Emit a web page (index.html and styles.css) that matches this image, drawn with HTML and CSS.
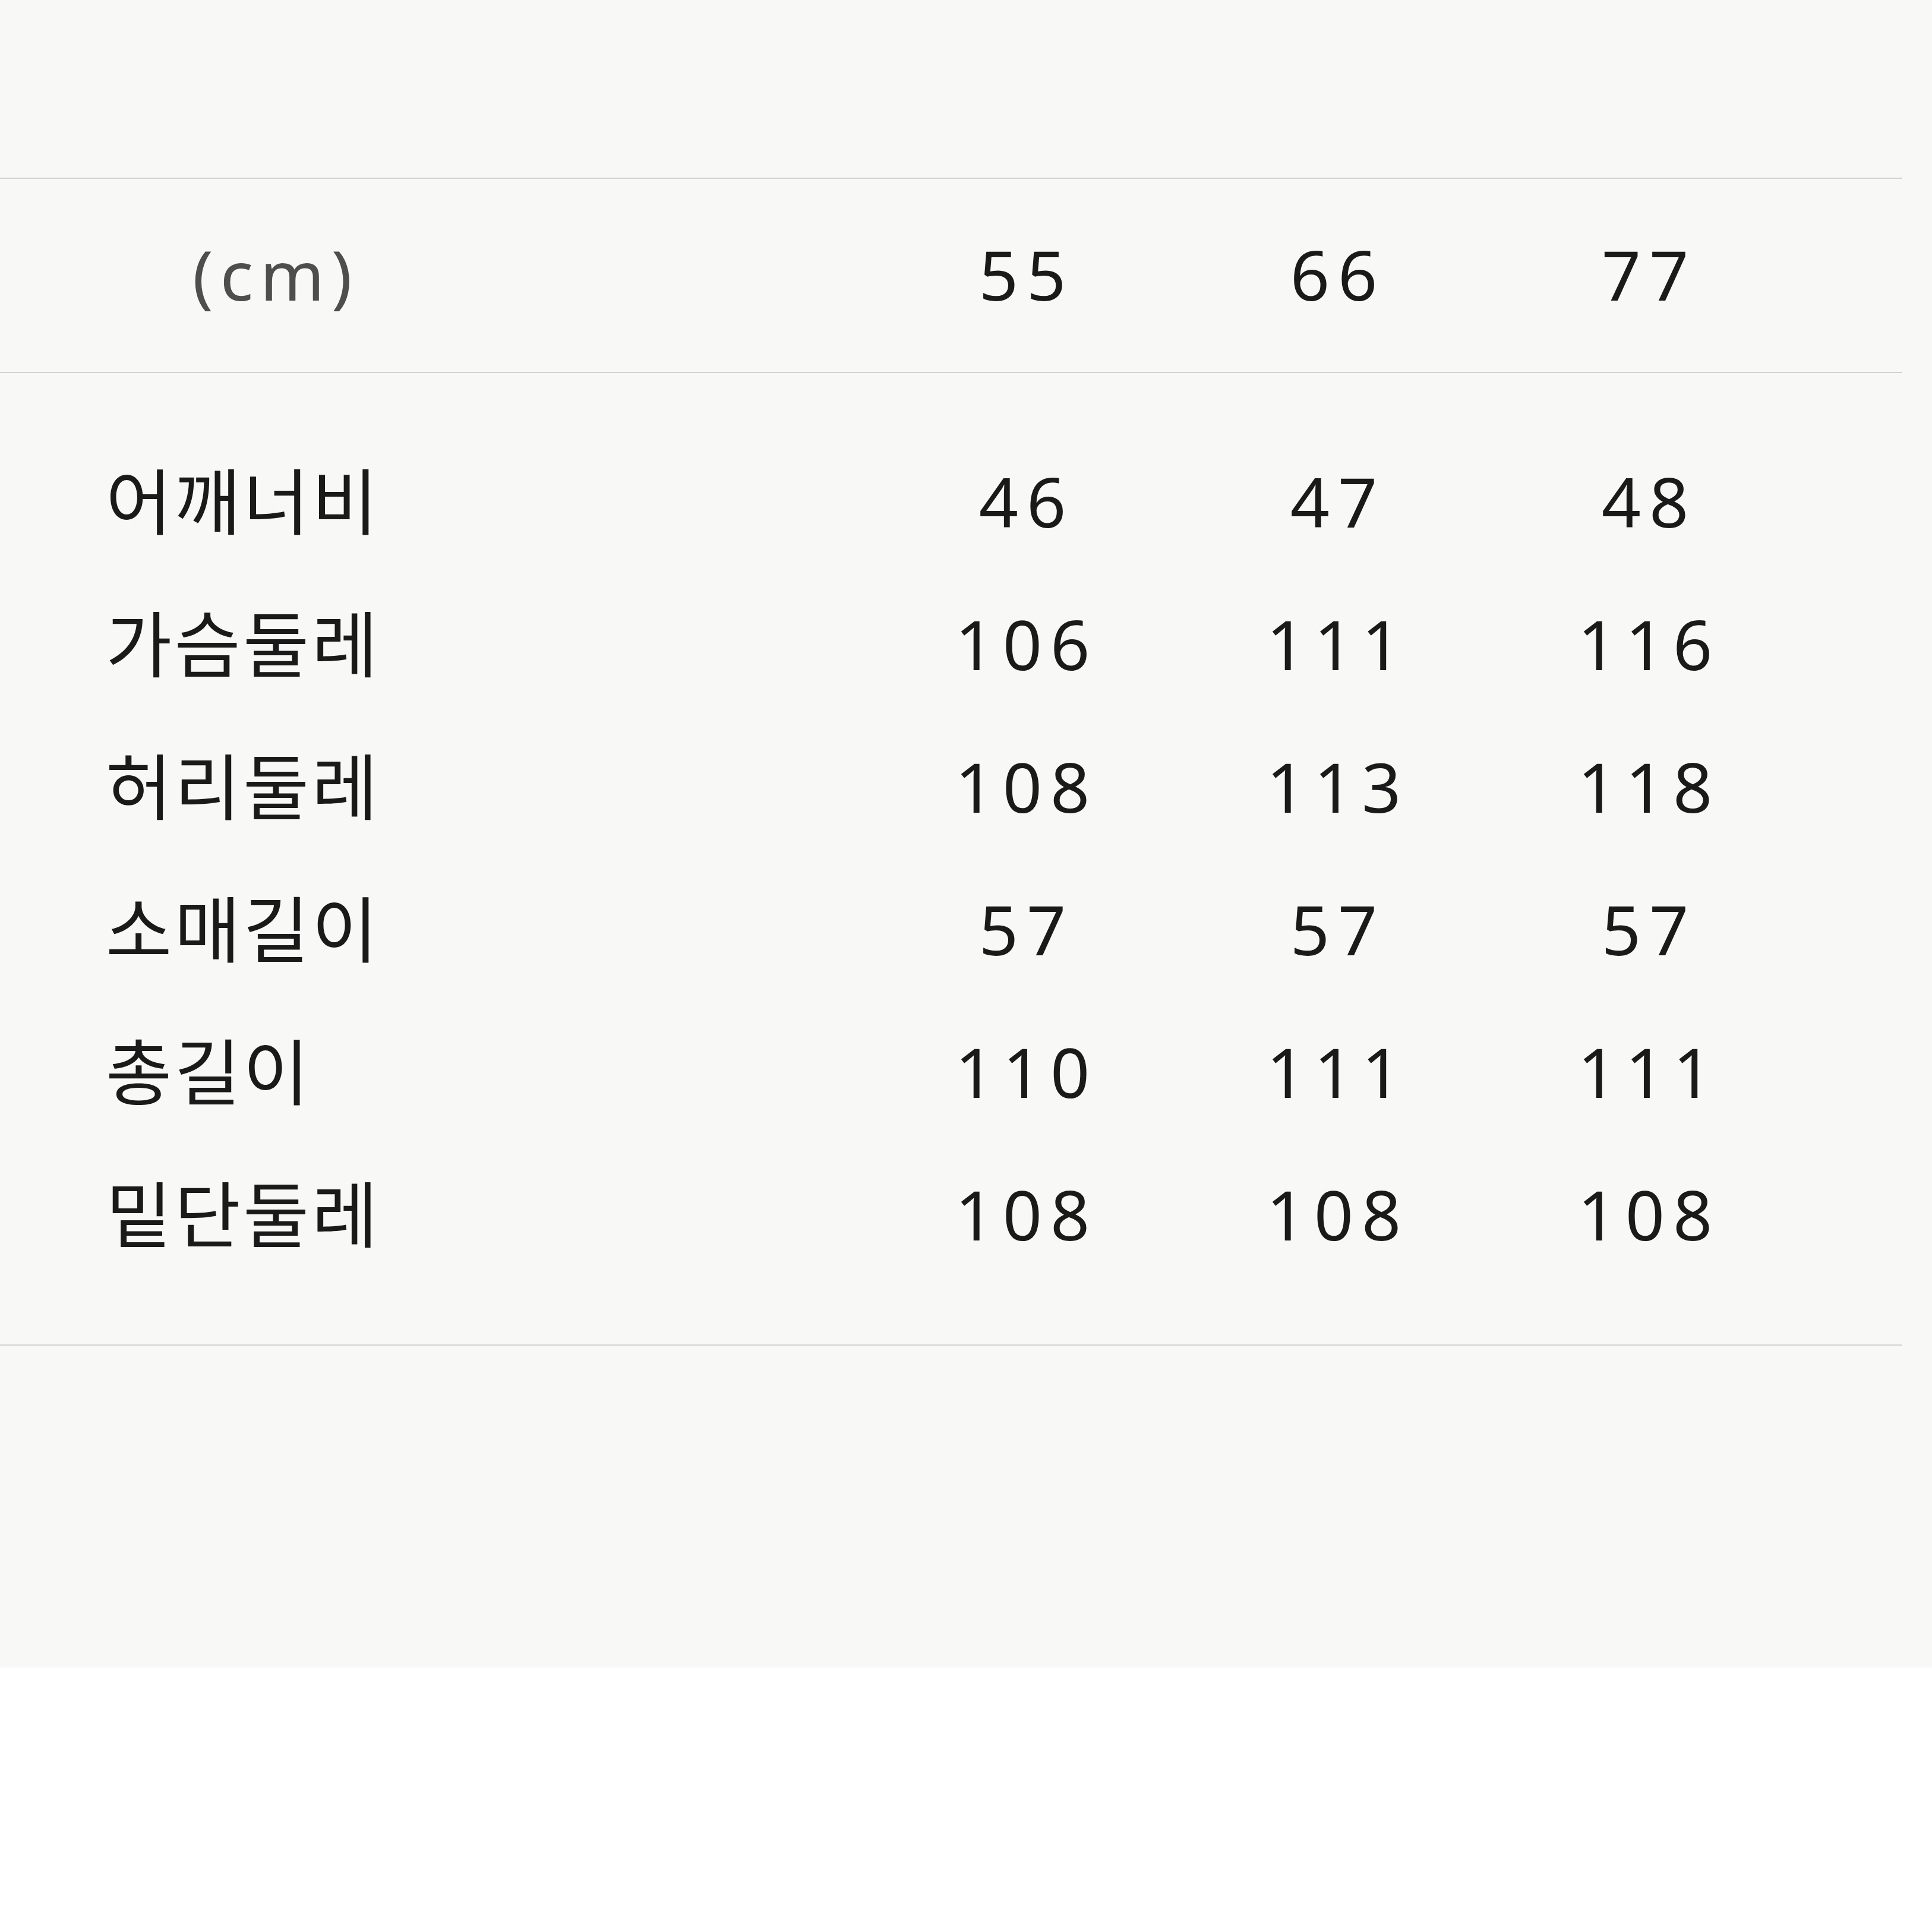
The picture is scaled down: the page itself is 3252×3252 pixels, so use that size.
FILE: index.html
```html
<!DOCTYPE html>
<html lang="ko">
<head>
<meta charset="utf-8">
<title>사이즈 표</title>
<link rel="stylesheet" href="styles.css">
</head>
<body>
<div class="sheet">
  <div class="table">
    <div class="row head">
      <div class="cell label unit">(cm)</div>
      <div class="cell num">55</div>
      <div class="cell num">66</div>
      <div class="cell num">77</div>
    </div>
    <div class="body">
      <div class="row">
        <div class="cell label">어깨너비</div>
        <div class="cell num">46</div>
        <div class="cell num">47</div>
        <div class="cell num">48</div>
      </div>
      <div class="row">
        <div class="cell label">가슴둘레</div>
        <div class="cell num">106</div>
        <div class="cell num">111</div>
        <div class="cell num">116</div>
      </div>
      <div class="row">
        <div class="cell label">허리둘레</div>
        <div class="cell num">108</div>
        <div class="cell num">113</div>
        <div class="cell num">118</div>
      </div>
      <div class="row">
        <div class="cell label">소매길이</div>
        <div class="cell num">57</div>
        <div class="cell num">57</div>
        <div class="cell num">57</div>
      </div>
      <div class="row">
        <div class="cell label">총길이</div>
        <div class="cell num">110</div>
        <div class="cell num">111</div>
        <div class="cell num">111</div>
      </div>
      <div class="row">
        <div class="cell label">밑단둘레</div>
        <div class="cell num">108</div>
        <div class="cell num">108</div>
        <div class="cell num">108</div>
      </div>
    </div>
  </div>
</div>
</body>
</html>
```
FILE: styles.css
```css
html, body {
  margin: 0;
  padding: 0;
  background: #ffffff;
}

body {
  font-family: "Noto Sans", "Noto Sans CJK KR", sans-serif;
  color: #1a1a1a;
}

.sheet {
  background: #f8f8f6;
  height: 2807px;
  padding-top: 299px;
  box-sizing: border-box;
}

.table {
  width: 3202px;
  border-top: 2px solid #d3d3cf;
  border-bottom: 2px solid #d3d3cf;
}

.row {
  display: grid;
  grid-template-columns: 1459px 524px 524px 524px;
  align-items: center;
  height: 240px;
}

.row.head {
  height: 327px;
  border-bottom: 2px solid #d3d3cf;
  padding-bottom: 6px;
  box-sizing: border-box;
}

.body {
  padding: 95px 0 100px;
}

.cell {
  line-height: 1;
  white-space: nowrap;
}

.label {
  padding-left: 178px;
  font-size: 121px;
  letter-spacing: 0.035em;
}

.label.unit {
  padding-left: 324px;
  font-size: 116px;
  letter-spacing: 0.1em;
  color: #4e4e4e;
}

.num {
  text-align: center;
  font-size: 116px;
  letter-spacing: 0.12em;
  text-indent: 0.12em;
}
```
